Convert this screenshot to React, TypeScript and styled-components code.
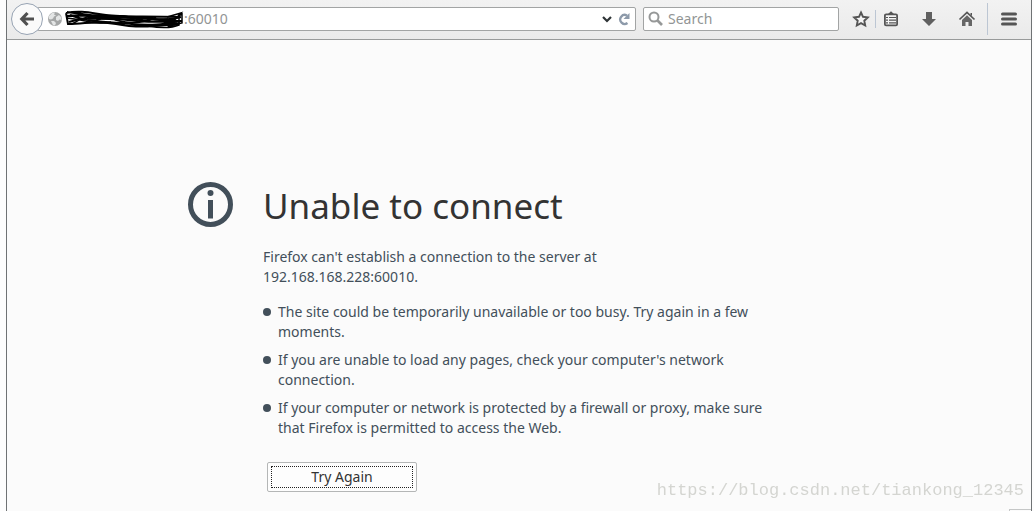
import React from 'react';
import styled, { createGlobalStyle } from 'styled-components';

const GlobalStyle = createGlobalStyle`
  * { box-sizing: border-box; }
  body {
    margin: 0;
    background: #fdfdfd;
    font-family: "Noto Sans", "Open Sans", sans-serif;
    font-size: 14px;
    line-height: 20px;
    color: #424f5a;
  }
`;

const BrowserWindow = styled.div`
  display: flex;
  flex-direction: column;
  min-height: 100vh;
  margin: 0 2px 0 6px;
  border: solid #6f7274;
  border-width: 0 1px;
  background: #fbfbfb;
`;

const Toolbar = styled.header`
  display: flex;
  align-items: center;
  height: 40px;
  padding: 0 1px 2px 4px;
  border-bottom: 1px solid #989a9a;
  background: linear-gradient(#f2f2f2, #eaeaea);
`;

const BackButton = styled.button`
  position: relative;
  display: grid;
  place-items: center;
  flex: none;
  width: 32px;
  height: 32px;
  margin-right: -6px;
  padding: 0;
  border: 1px solid #97a3b3;
  border-radius: 50%;
  background: #fafafa;
`;

const Field = styled.div`
  display: flex;
  align-items: center;
  height: 24px;
  border: 1px solid #a2a4a4;
  border-radius: 2px;
  background: #fff;
`;

const AddressField = styled(Field)`
  flex: 1;
  min-width: 0;
  padding: 0 3px 0 9px;
`;

const SearchField = styled(Field)`
  flex: 0 1 196px;
  min-width: 80px;
  margin: 0 8px 0 7px;
  padding: 0 4px;
  gap: 4px;
`;

const FieldInput = styled.input`
  flex: 1;
  min-width: 0;
  width: 100%;
  padding: 0;
  border: 0;
  outline: 0;
  background: transparent;
  font: 14px/20px "Noto Sans", sans-serif;
  color: #929595;
  &::placeholder { color: #929595; opacity: 1; }
`;

const Scribble = styled.svg`
  flex: none;
  margin-left: 1px;
`;

const IconButton = styled.button<{ $width: number }>`
  display: grid;
  place-items: center;
  flex: none;
  width: ${(p) => p.$width}px;
  height: 28px;
  padding: 0;
  border: 0;
  background: transparent;
`;

const Divider = styled.span<{ $tall?: boolean }>`
  flex: none;
  width: 1px;
  height: ${(p) => (p.$tall ? 32 : 18)}px;
  margin-left: ${(p) => (p.$tall ? 5 : 0)}px;
  background: #bcc6d3;
`;

const Page = styled.main`
  flex: 1;
  display: flex;
  justify-content: center;
  align-items: flex-start;
  padding: 142px 24px 18px;
`;

const ErrorPanel = styled.section`
  display: flex;
  align-items: flex-start;
  gap: 30px;
  width: 100%;
  max-width: 662px;
`;

const InfoIcon = styled.svg`
  flex: none;
`;

const Message = styled.div`
  flex: 1;
  min-width: 0;
  max-width: 516px;
`;

const Title = styled.h1`
  margin: 0 0 17px;
  font-size: 35px;
  font-weight: 400;
  line-height: 48px;
  color: #333;
`;

const Summary = styled.p`
  margin: 0 0 15px;
`;

const Host = styled.span`
  display: block;
`;

const Hints = styled.ul`
  margin: 0;
  padding: 0;
  list-style: none;
`;

const Hint = styled.li`
  display: flex;
  gap: 7px;
  margin-bottom: 8px;
  &::before {
    content: "";
    flex: none;
    width: 8px;
    height: 8px;
    margin-top: 6px;
    border-radius: 50%;
    background: #424f5a;
  }
`;

const RetryButton = styled.button`
  display: block;
  width: 150px;
  height: 30px;
  margin: 24px 0 0 4px;
  padding: 3px;
  border: 1px solid #b4b6b6;
  border-radius: 2px;
  background: #fdfdfd;
  font: 14px/20px "Noto Sans", sans-serif;
  color: #333;
`;

const FocusRing = styled.span`
  display: block;
  height: 22px;
  border: 1px dotted #222;
`;

const Watermark = styled.span`
  position: fixed;
  right: 10px;
  bottom: 10px;
  font: 17px/20px "Liberation Mono", monospace;
  color: #d4d5d1;
`;

const StatusCorner = styled.span`
  position: fixed;
  right: 3px;
  bottom: 0;
  width: 22px;
  height: 2px;
  border-top: 1px solid #c5c7c7;
  border-left: 1px solid #c5c7c7;
`;

const INK = '#555';

const hints = [
  'The site could be temporarily unavailable or too busy. Try again in a few moments.',
  "If you are unable to load any pages, check your computer's network connection.",
  'If your computer or network is protected by a firewall or proxy, make sure that Firefox is permitted to access the Web.',
];

export default function App() {
  return (
    <BrowserWindow>
      <GlobalStyle />
      <Toolbar>
        <BackButton aria-label="Back">
          <svg width="16" height="16" viewBox="0 0 16 16" fill="none" stroke="#505050" strokeWidth="3.200">
            <path d="M8.500 2 2.800 8l5.700 6M3 8h12" />
          </svg>
        </BackButton>
        <AddressField>
          <svg width="16" height="16" viewBox="0 0 16 16">
            <circle cx="8" cy="8" r="7" fill="#a5a7a7" />
            <path d="M2 5 5 2l3-.5-1 2 2 1-2 1-1 2-2 1-2-.5zM9 6l3-2 2 2 .5 3-2-.5-1.500 1.500L9 9zM4 10l3 0 2 2-1 2.500-2-.5z" fill="#e3e5e5" />
          </svg>
          <Scribble width="120" height="20" viewBox="0 0 120 20" fill="none" stroke="#000" strokeWidth="1.500">
            <path strokeWidth="2" d="M2 4C16 1 27 4 42 6s34 1 74 2M2 4l2 11C22 15 33 11 52 15s44 3 64-1M3 7c30-4 55 9 113 5M5 13c25-9 38 0 61-3s33 3 52 2M6 6c20 8 42 7 62 9s32 0 45-2M3 3c25 3 39 6 57 5s38 6 57 0" />
            <path d="M8 15C24 5 40 4 48 9s30 7 44-1M15 4c18 9 37-1 50 4s21 5 38 3M30 13c12-8 32 1 44-4M70 17c15-4 25 2 42-2M103 8l14-4-12 13 13-3V5l-14 8M24 10h80M3 9c19 2 28 7 44 4M84 17c12 2 24 2 31-1V5" />
          </Scribble>
          <FieldInput aria-label="Address" defaultValue=":60010" />
          <IconButton $width={18} aria-label="Show history">
            <svg width="12" height="10" viewBox="0 0 12 10" fill="none" stroke="#2e3436" strokeWidth="2.200">
              <path d="m2 3 4 4 4-4" />
            </svg>
          </IconButton>
          <IconButton $width={16} aria-label="Reload">
            <svg width="14" height="14" viewBox="0 0 14 14">
              <path d="M10 3.500A4.500 4.500 0 1 0 10.500 11" fill="none" stroke="#8d9aaa" strokeWidth="2.300" />
              <path d="M12.500 1v6H6.500z" fill="#8d9aaa" />
            </svg>
          </IconButton>
        </AddressField>
        <SearchField>
          <svg width="16" height="16" viewBox="0 0 16 16" fill="none" stroke="#969898">
            <circle cx="6" cy="6" r="4.500" strokeWidth="2" />
            <path d="m9.500 9.500 4.500 4.500" strokeWidth="2.600" />
          </svg>
          <FieldInput aria-label="Search" placeholder="Search" />
        </SearchField>
        <IconButton $width={28} aria-label="Bookmark this page">
          <svg width="18" height="18" viewBox="0 0 18 18" fill="#f4f4f4" stroke={INK} strokeWidth="1.900">
            <path d="m9 2.500 2 4.300 4.800.6-3.500 3.300.9 4.800L9 13.200l-4.200 2.300.9-4.800-3.500-3.300 4.800-.6z" />
          </svg>
        </IconButton>
        <Divider />
        <IconButton $width={30} aria-label="Bookmarks">
          <svg width="16" height="16" viewBox="0 0 16 16">
            <path d="M4.500 3.500 8 .3l3.500 3.200z" fill={INK} />
            <rect x="1.900" y="3.400" width="12.200" height="11" rx="1.200" fill="#f4f4f4" stroke={INK} strokeWidth="1.800" />
            <path d="M3 6.500h2M6 6.500h7M3 9.200h2M6 9.200h7M3 11.900h2M6 11.900h7" stroke={INK} strokeWidth="1.200" />
          </svg>
        </IconButton>
        <IconButton $width={46} aria-label="Downloads">
          <svg width="16" height="16" viewBox="0 0 16 16">
            <path d="M5 1h6v7h4l-7 7-7-7h4z" fill="#606060" />
          </svg>
        </IconButton>
        <IconButton $width={30} aria-label="Home">
          <svg width="18" height="16" viewBox="0 0 18 16">
            <path d="m1.500 8.500 7.500-7 7.500 7" fill="none" stroke={INK} strokeWidth="1.700" />
            <path d="M4 9l5-4.800L14 9v6h-3.500v-4h-3v4H4z" fill="#666" />
            <path d="M12.500 2H14v3l-1.500-1z" fill={INK} />
          </svg>
        </IconButton>
        <Divider $tall />
        <IconButton $width={42} aria-label="Open menu">
          <svg width="16" height="14" viewBox="0 0 16 14" stroke={INK} strokeWidth="3" strokeLinecap="round">
            <path d="M1.500 2h13M1.500 7h13M1.500 12h13" />
          </svg>
        </IconButton>
      </Toolbar>
      <Page>
        <ErrorPanel>
          <InfoIcon width="45" height="45" viewBox="0 0 45 45">
            <circle cx="22.500" cy="22.500" r="20" fill="none" stroke="#424f5a" strokeWidth="5" />
            <circle cx="22.500" cy="11" r="3" fill="#424f5a" />
            <path d="M20 18h5v18.500h-5z" fill="#424f5a" />
          </InfoIcon>
          <Message>
            <Title>Unable to connect</Title>
            <Summary>
              Firefox can't establish a connection to the server at <Host>192.168.168.228:60010.</Host>
            </Summary>
            <Hints>
              {hints.map((hint) => (
                <Hint key={hint}>{hint}</Hint>
              ))}
            </Hints>
            <RetryButton>
              <FocusRing>Try Again</FocusRing>
            </RetryButton>
          </Message>
        </ErrorPanel>
      </Page>
      <Watermark>https://blog.csdn.net/tiankong_12345</Watermark>
      <StatusCorner />
    </BrowserWindow>
  );
}
